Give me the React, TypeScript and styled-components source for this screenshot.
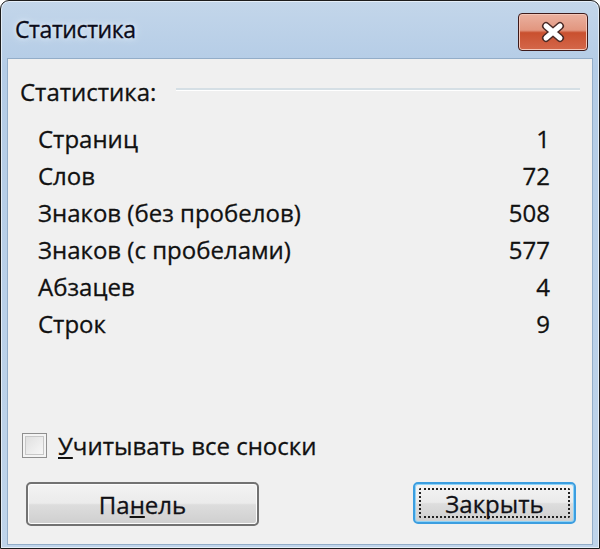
import styled, { createGlobalStyle } from "styled-components";

const GlobalStyle = createGlobalStyle`
  html, body {
    margin: 0;
    padding: 0;
    background: #ffffff;
  }
  body {
    font-family: "Open Sans", "Noto Sans", "Liberation Sans", sans-serif;
  }
`;

const stats = [
  { label: "Страниц", value: "1" },
  { label: "Слов", value: "72" },
  { label: "Знаков (без пробелов)", value: "508" },
  { label: "Знаков (с пробелами)", value: "577" },
  { label: "Абзацев", value: "4" },
  { label: "Строк", value: "9" },
];

const App = () => {
  return (
    <>
      <GlobalStyle />
      <StyledWindow>
        <StyledTitleBar>
          <StyledTitle>Статистика</StyledTitle>
          <StyledCloseButton>
            <svg width="34" height="22" viewBox="0 0 34 22">
              <path
                d="M10 5 L24 17 M24 5 L10 17"
                stroke="#4a2a26"
                strokeWidth="8"
                strokeLinecap="round"
              />
              <path
                d="M10 5 L24 17 M24 5 L10 17"
                stroke="#ffffff"
                strokeWidth="5"
                strokeLinecap="round"
              />
            </svg>
          </StyledCloseButton>
        </StyledTitleBar>
        <StyledBody>
          <StyledGroupHeader>
            <span>Статистика:</span>
            <StyledRule />
          </StyledGroupHeader>
          <StyledStats>
            {stats.map((s) => (
              <StyledRow key={s.label}>
                <span>{s.label}</span>
                <StyledValue>{s.value}</StyledValue>
              </StyledRow>
            ))}
          </StyledStats>
          <StyledCheckRow>
            <StyledCheckbox />
            <span>
              <u>У</u>читывать все сноски
            </span>
          </StyledCheckRow>
          <StyledButtons>
            <StyledButton $width={233}>
              Па<u>н</u>ель
            </StyledButton>
            <StyledButton $width={163} $default>
              <StyledFocus>Закрыть</StyledFocus>
            </StyledButton>
          </StyledButtons>
        </StyledBody>
      </StyledWindow>
    </>
  );
};
export default App;

const StyledWindow = styled.div`
  box-sizing: border-box;
  width: 600px;
  height: 549px;
  display: flex;
  flex-direction: column;
  border: 1px solid #1c1c1c;
  border-radius: 9px 9px 0 0;
  background: linear-gradient(to bottom, #c3d6ea 0%, #b4cce6 12%, #bfd4ea 100%);
  box-shadow: inset 0 0 0 1px #e4eef8;
  padding: 0 6px 3px 6px;
  overflow: hidden;
`;

const StyledTitleBar = styled.div`
  height: 57px;
  flex: none;
  display: flex;
  align-items: center;
  justify-content: space-between;
  padding: 0 5px 0 8px;
  box-sizing: border-box;
`;

const StyledTitle = styled.div`
  font-size: 23px;
  color: #0c0c1a;
  letter-spacing: -0.4px;
  margin-top: -2px;
  -webkit-text-stroke: 0.3px #0c0c1a;
  text-shadow: 0 0 8px #e6eff8, 0 0 4px #e6eff8;
`;

const StyledCloseButton = styled.div`
  width: 70px;
  height: 38px;
  box-sizing: border-box;
  margin-top: 5px;
  border: 1px solid #3d1a1a;
  border-radius: 4px;
  display: flex;
  align-items: center;
  justify-content: center;
  background: linear-gradient(
    to bottom,
    #eab1a0 0%,
    #e2967f 45%,
    #c9502f 52%,
    #d4674a 100%
  );
  box-shadow: inset 0 0 0 1px #f3c6b8;
`;

const StyledBody = styled.div`
  flex: 1;
  display: flex;
  flex-direction: column;
  background: #f0f0f0;
  border: 1px solid #93adc8;
  color: #111111;
  font-size: 24px;
  -webkit-text-stroke: 0.3px #111111;
  padding: 16px 12px 18px 12px;
`;

const StyledGroupHeader = styled.div`
  display: flex;
  align-items: center;
  gap: 20px;
`;

const StyledRule = styled.div`
  flex: 1;
  height: 2px;
  margin-top: -4px;
  background: #d5dfe5;
  border-bottom: 1px solid #ffffff;
`;

const StyledStats = styled.div`
  display: flex;
  flex-direction: column;
  padding: 12px 30px 0 18px;
`;

const StyledRow = styled.div`
  display: flex;
  justify-content: space-between;
  align-items: center;
  height: 37px;
`;

const StyledValue = styled.span`
  text-align: right;
`;

const StyledCheckRow = styled.div`
  margin-top: auto;
  display: flex;
  align-items: center;
  gap: 11px;
  padding-left: 2px;
`;

const StyledCheckbox = styled.div`
  width: 25px;
  height: 25px;
  box-sizing: border-box;
  border: 1px solid #8f8f8f;
  background: linear-gradient(135deg, #dcdcdc, #fbfbfb);
  box-shadow: inset 0 0 0 2px #f4f4f4, inset 0 0 0 3px #c8c8c8;
`;

const StyledButtons = styled.div`
  display: flex;
  justify-content: space-between;
  margin-top: 20px;
  padding: 0 4px 0 6px;
`;

const StyledButton = styled.div<{ $width: number; $default?: boolean }>`
  width: ${(p) => p.$width}px;
  height: ${(p) => (p.$default ? 42 : 44)}px;
  box-sizing: border-box;
  display: flex;
  align-items: center;
  justify-content: center;
  border: 2px solid ${(p) => (p.$default ? "#3c9ee0" : "#727272")};
  border-radius: 5px;
  background: linear-gradient(
    to bottom,
    #f3f3f3 0%,
    #ebebeb 48%,
    #dddddd 52%,
    #cfcfcf 100%
  );
  box-shadow: inset 0 0 0 1px ${(p) => (p.$default ? "#8ed3f7" : "#fcfcfc")};
  color: #101018;
  font-size: 24px;
`;

const StyledFocus = styled.span`
  display: flex;
  align-items: center;
  justify-content: center;
  width: calc(100% - 8px);
  height: calc(100% - 8px);
  box-sizing: border-box;
  border: 2px dotted #222222;
  border-radius: 2px;
`;
